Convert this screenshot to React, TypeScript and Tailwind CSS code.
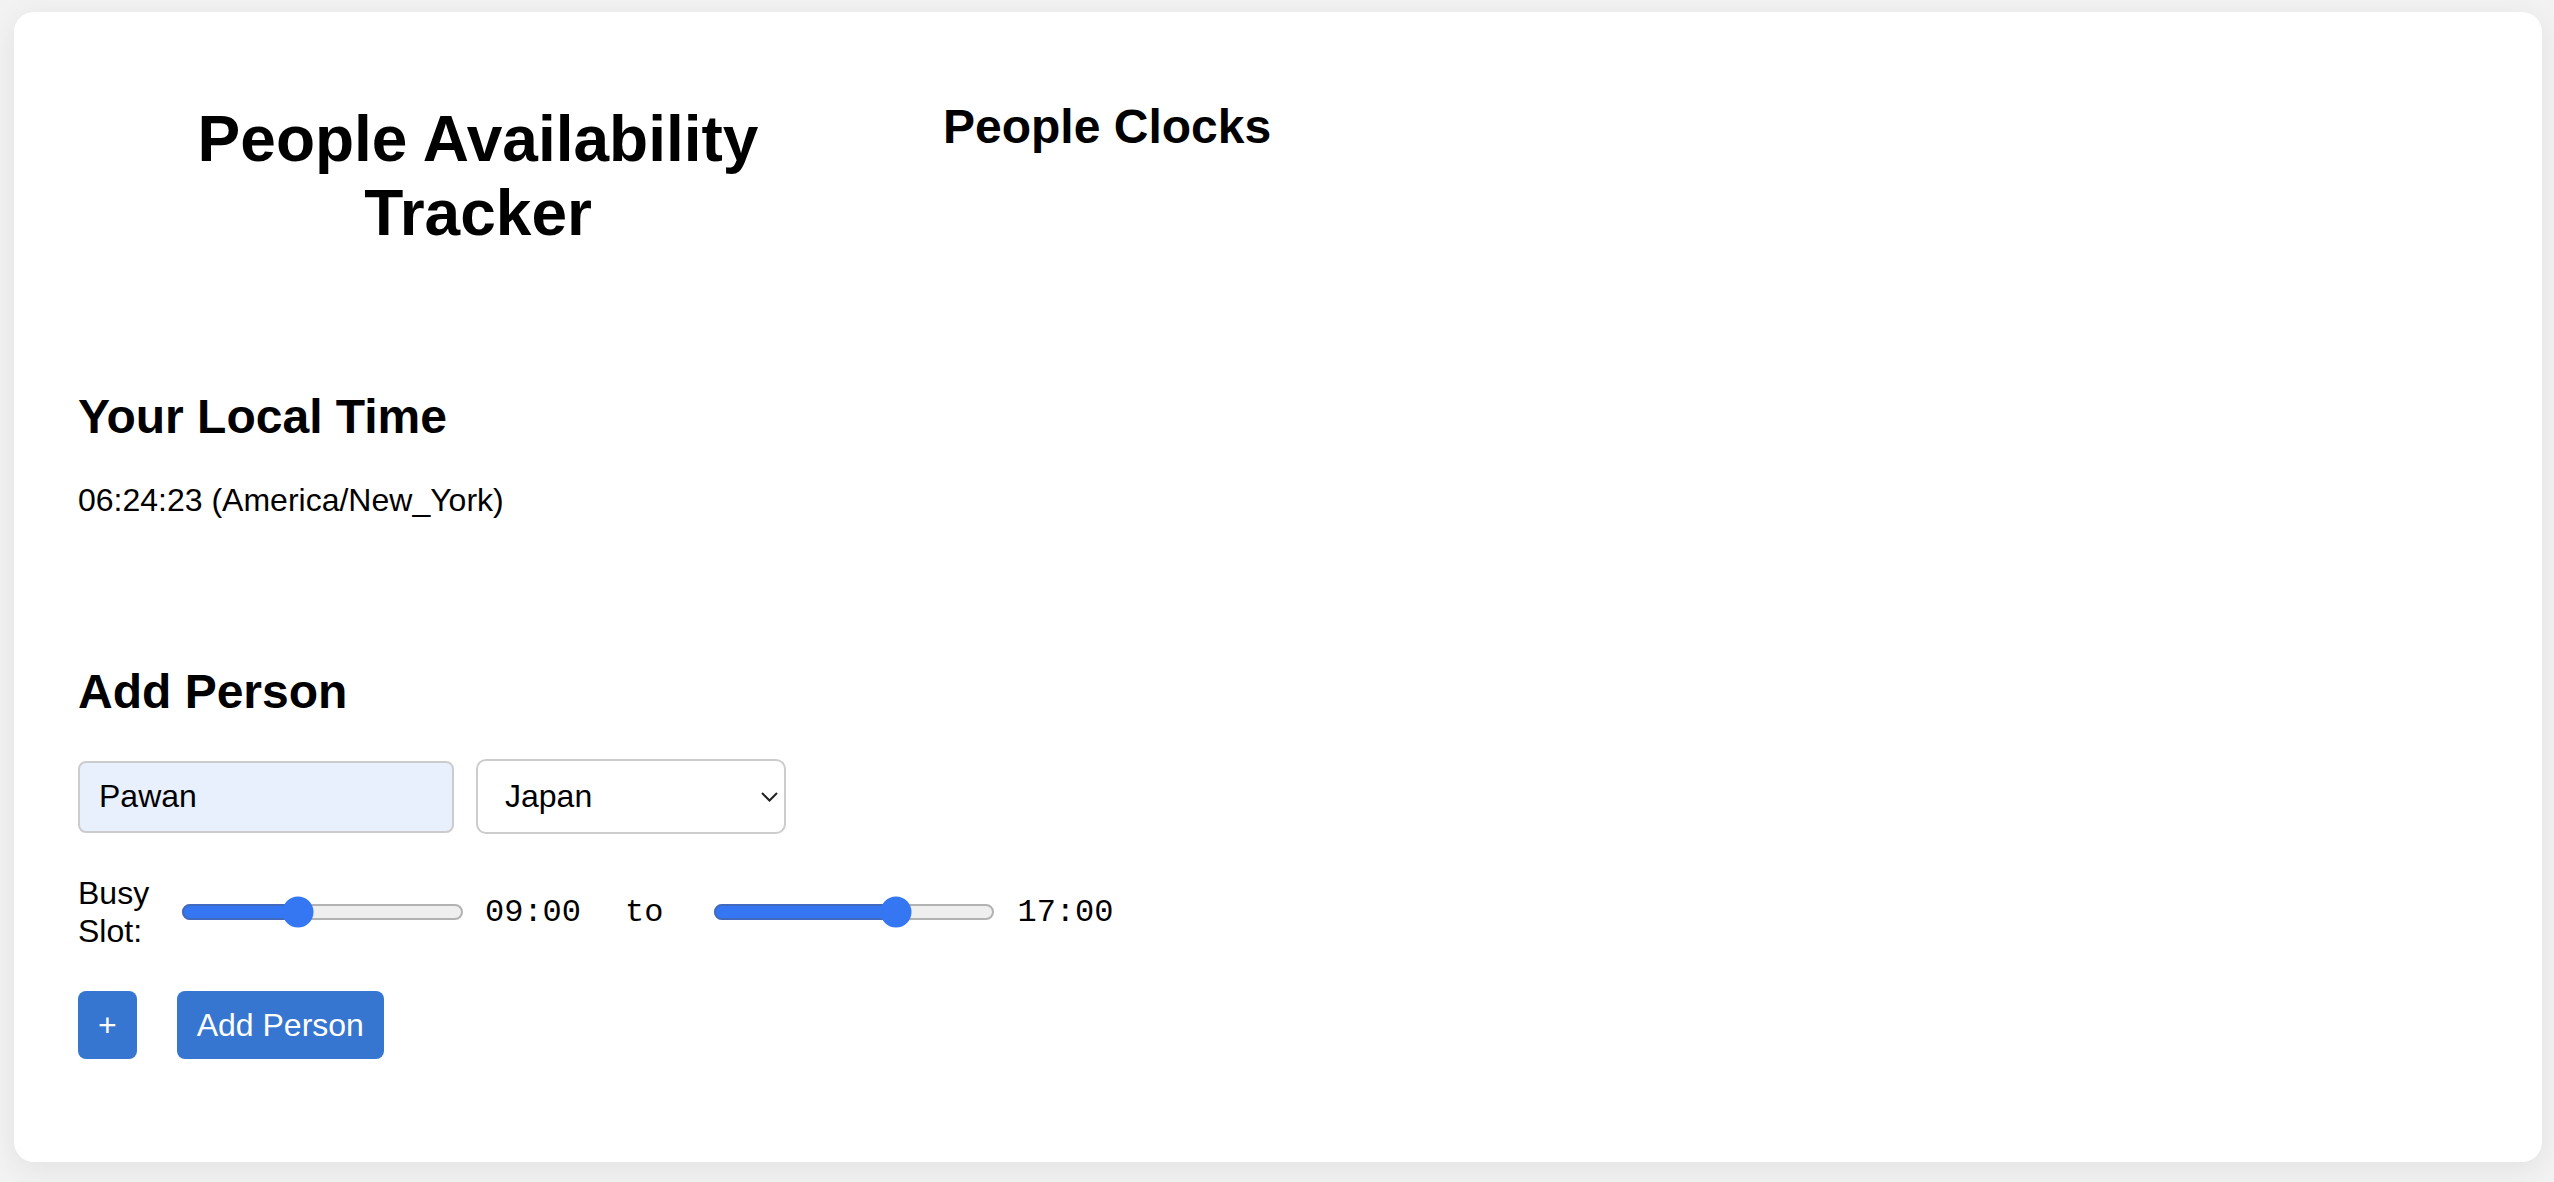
import { useState } from 'react';

interface SliderProps {
    thumbCenter: number;
    width: number;
}

function BusySlider({ thumbCenter, width }: SliderProps) {
    return (
        <div
            role="slider"
            className="relative h-[32px] flex items-center shrink-0"
            style={{ width }}
        >
            <div className="relative w-full h-[16px] rounded-full border-2 border-[#b2b2b2] bg-[#efefef]">
                <div
                    className="absolute -left-[2px] -top-[2px] h-[16px] rounded-full bg-[#3577f3] border-2 border-[#4169bd]"
                    style={{ width: thumbCenter + 2 }}
                />
            </div>
            <div
                className="absolute top-1/2 -translate-y-1/2 -translate-x-1/2 w-[31px] h-[31px] rounded-full bg-[#3577f3]"
                style={{ left: thumbCenter }}
            />
        </div>
    );
}

export default function App() {
    const [name, setName] = useState('Pawan');
    const [country, setCountry] = useState('Japan');

    return (
        <div className="min-h-screen bg-[#f2f2f2] pt-[12px] pb-[20px] font-['Liberation_Sans',Arial,sans-serif] text-black">
            <div className="ml-[14px] mr-[12px] h-[1150px] rounded-[20px] bg-white shadow-[0_6px_28px_rgba(0,0,0,0.07)] px-[64px] pt-[87px]">
                <div className="flex items-start">
                    <div className="w-[800px] shrink-0">
                        <h1 className="mt-[3px] text-center text-[64px] leading-[74px] font-bold">
                            People Availability Tracker
                        </h1>
                    </div>
                    <div className="ml-[65px]">
                        <h2 className="text-[48px] leading-[55px] font-bold">People Clocks</h2>
                    </div>
                </div>

                <section className="mt-[139px]">
                    <h2 className="text-[48px] leading-[55px] font-bold">Your Local Time</h2>
                    <p className="mt-[38px] text-[32px] leading-[37px]">06:24:23 (America/New_York)</p>
                </section>

                <section className="mt-[145px]">
                    <h2 className="text-[48px] leading-[55px] font-bold">Add Person</h2>

                    <div className="mt-[40px] flex items-center">
                        <input
                            value={name}
                            onChange={(e) => setName(e.target.value)}
                            className="w-[376px] h-[72px] rounded-[8px] border-2 border-[#cccccc] bg-[#e8f0fe] pl-[19px] text-[32px] leading-[37px] outline-none"
                        />
                        <div className="relative ml-[22px]">
                            <select
                                value={country}
                                onChange={(e) => setCountry(e.target.value)}
                                className="appearance-none w-[310px] h-[75px] rounded-[10px] border-2 border-[#cccccc] bg-white pl-[27px] text-[32px] leading-[37px] outline-none"
                            >
                                <option>Japan</option>
                                <option>India</option>
                                <option>United States</option>
                            </select>
                            <svg
                                className="pointer-events-none absolute right-[8px] top-[33px]"
                                width="17"
                                height="10"
                                viewBox="0 0 17 10"
                                fill="none"
                            >
                                <polyline points="1,1 8.5,8.5 16,1" stroke="#222" strokeWidth="2" />
                            </svg>
                        </div>
                    </div>

                    <div className="mt-[40px] flex items-center">
                        <label className="w-[72px] text-[32px] leading-[38px]">Busy Slot:</label>
                        <div className="ml-[32px]">
                            <BusySlider width={281} thumbCenter={116} />
                        </div>
                        <span className="ml-[22px] font-['Liberation_Mono',monospace] text-[32px] leading-[37px]">09:00</span>
                        <span className="ml-[44px] font-['Liberation_Mono',monospace] text-[32px] leading-[37px]">to</span>
                        <div className="ml-[51px]">
                            <BusySlider width={280} thumbCenter={182} />
                        </div>
                        <span className="ml-[23px] font-['Liberation_Mono',monospace] text-[32px] leading-[37px]">17:00</span>
                    </div>

                    <div className="mt-[41px] flex items-center">
                        <button className="h-[68px] rounded-[8px] bg-[#3676d0] px-[20px] text-[32px] leading-[37px] text-white">
                            +
                        </button>
                        <button className="ml-[40px] h-[68px] rounded-[8px] bg-[#3676d0] px-[20px] text-[32px] leading-[37px] text-white">
                            Add Person
                        </button>
                    </div>
                </section>
            </div>
        </div>
    );
}
